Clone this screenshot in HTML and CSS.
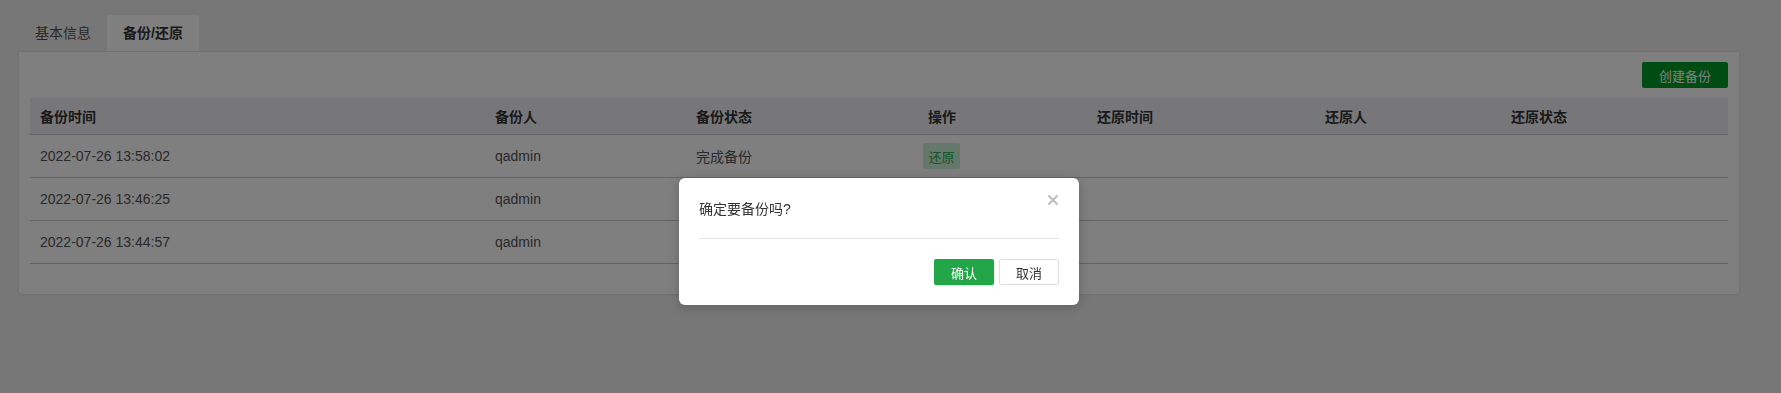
FILE: index.html
```html
<!DOCTYPE html>
<html lang="zh-CN">
<head>
<meta charset="utf-8">
<title>备份/还原</title>
<link rel="stylesheet" href="styles.css">
</head>
<body>
<div class="page">
  <div class="tabs">
    <div class="tab">基本信息</div>
    <div class="tab tab-active">备份/还原</div>
  </div>
  <div class="card">
    <div class="toolbar">
      <button class="btn-create">创建备份</button>
    </div>
    <div class="table">
      <div class="row row-head">
        <div class="cell">备份时间</div>
        <div class="cell">备份人</div>
        <div class="cell">备份状态</div>
        <div class="cell">操作</div>
        <div class="cell">还原时间</div>
        <div class="cell">还原人</div>
        <div class="cell">还原状态</div>
      </div>
      <div class="row">
        <div class="cell">2022-07-26 13:58:02</div>
        <div class="cell">qadmin</div>
        <div class="cell">完成备份</div>
        <div class="cell"><button class="btn-restore">还原</button></div>
        <div class="cell"></div>
        <div class="cell"></div>
        <div class="cell"></div>
      </div>
      <div class="row">
        <div class="cell">2022-07-26 13:46:25</div>
        <div class="cell">qadmin</div>
        <div class="cell"></div>
        <div class="cell"></div>
        <div class="cell"></div>
        <div class="cell"></div>
        <div class="cell"></div>
      </div>
      <div class="row">
        <div class="cell">2022-07-26 13:44:57</div>
        <div class="cell">qadmin</div>
        <div class="cell"></div>
        <div class="cell"></div>
        <div class="cell"></div>
        <div class="cell"></div>
        <div class="cell"></div>
      </div>
    </div>
  </div>
</div>
<div class="overlay"></div>
<div class="modal">
  <div class="modal-title">确定要备份吗?</div>
  <span class="modal-close"><svg width="10" height="10" viewBox="0 0 10 10"><path d="M1 1L9 9M9 1L1 9" stroke="#c0c0c0" stroke-width="2.2" stroke-linecap="square"/></svg></span>
  <div class="modal-footer">
    <button class="btn-ok">确认</button>
    <button class="btn-cancel">取消</button>
  </div>
</div>
</body>
</html>
```
FILE: styles.css
```css
* { box-sizing: border-box; }
html, body {
  margin: 0;
  padding: 0;
  background: #efefef;
  font-family: "Liberation Sans", "Noto Sans CJK SC", sans-serif;
  font-size: 14px;
  color: #505255;
}
.page {
  padding: 15px 0 0 19px;
  height: 393px;
}
.tabs {
  display: flex;
  height: 36px;
  width: 1720px;
}
.tab {
  padding: 0 16px;
  line-height: 36px;
  font-size: 14px;
  color: #505050;
}
.tab-active {
  background: #ffffff;
  color: #333333;
  font-weight: bold;
  border-radius: 3px 3px 0 0;
}
.card {
  width: 1720px;
  background: #ffffff;
  border-radius: 0 0 4px 4px;
  padding: 11px 11px 30px;
  box-shadow: 0 1px 3px rgba(0, 0, 0, 0.08);
  border-top: 1px solid #e4e4e8;
}
.toolbar {
  display: flex;
  justify-content: flex-end;
  height: 26px;
  margin-top: -1px;
  margin-bottom: 10px;
}
button {
  font-family: "Liberation Sans", "Noto Sans CJK SC", sans-serif;
  cursor: pointer;
}
.btn-create {
  width: 86px;
  height: 26px;
  border: none;
  border-radius: 2px;
  background: #009a28;
  color: #ffffff;
  font-size: 13px;
  padding: 0;
}
.table {
  width: 1698px;
}
.row {
  display: grid;
  grid-template-columns: 455px 201px 232px 169px 228px 186px 227px;
  height: 43px;
  border-bottom: 1px solid #c6c7ce;
  align-items: center;
}
.row-head {
  height: 37px;
  background: #eeeef2;
  font-weight: bold;
  color: #333333;
}
.cell {
  padding: 0 10px;
  white-space: nowrap;
}
.btn-restore {
  margin-left: -5px;
  width: 37px;
  height: 26px;
  border: none;
  border-radius: 2px;
  background: #cdeed6;
  color: #2aad4f;
  font-size: 13px;
  padding: 0;
  display: block;
}
.overlay {
  position: fixed;
  inset: 0;
  background: rgba(0, 0, 0, 0.5);
}
.modal {
  position: absolute;
  left: 679px;
  top: 178px;
  width: 400px;
  background: #ffffff;
  border-radius: 6px;
  padding: 20px;
  box-shadow: 0 2px 12px rgba(0, 0, 0, 0.2);
}
.modal-title {
  font-size: 14px;
  line-height: 22px;
  color: #333333;
  padding-bottom: 18px;
  border-bottom: 1px solid #e2e4e8;
}
.modal-close {
  position: absolute;
  top: 17px;
  right: 21px;
  width: 10px;
  height: 10px;
  display: block;
}
.modal-close svg { display: block; }
.modal-footer {
  display: flex;
  justify-content: flex-end;
  gap: 5px;
  margin-top: 20px;
}
.btn-ok, .btn-cancel {
  width: 60px;
  height: 26px;
  border-radius: 2px;
  font-size: 13px;
  padding: 0;
}
.btn-ok {
  border: none;
  background: #22a648;
  color: #ffffff;
  box-shadow: 0 1px 2px rgba(0, 0, 0, 0.15);
}
.btn-cancel {
  border: 1px solid #dcdfe6;
  background: #ffffff;
  color: #333333;
}
```
